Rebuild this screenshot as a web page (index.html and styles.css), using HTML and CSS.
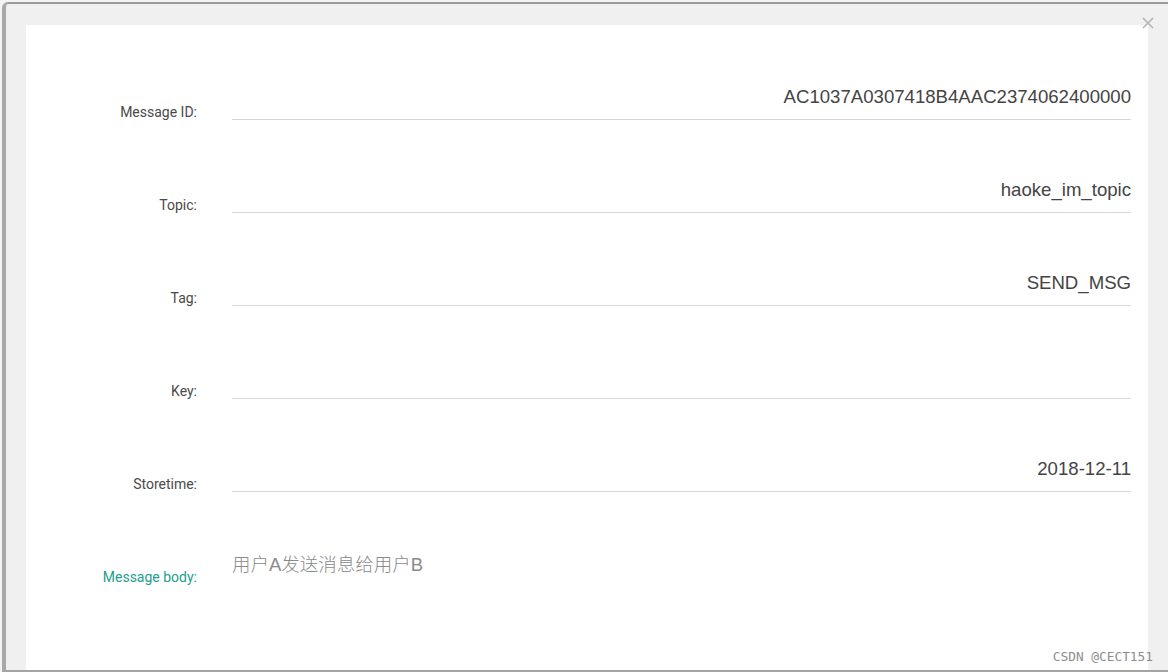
FILE: index.html
```html
<!DOCTYPE html>
<html lang="zh-CN">
<head>
<meta charset="utf-8">
<title>Message Detail</title>
<link rel="stylesheet" href="styles.css">
</head>
<body>
<div class="screen">
  <div class="frame">
    <button class="close" aria-label="close">
      <svg width="12" height="12" viewBox="0 0 12 12"><path d="M1 1L11 11M11 1L1 11" stroke="#b4b4b4" stroke-width="1.6" fill="none"/></svg>
    </button>
    <div class="modal">
      <div class="row">
        <div class="label">Message ID:</div>
        <div class="field"><span class="value">AC1037A0307418B4AAC2374062400000</span></div>
      </div>
      <div class="row">
        <div class="label">Topic:</div>
        <div class="field"><span class="value">haoke_im_topic</span></div>
      </div>
      <div class="row">
        <div class="label">Tag:</div>
        <div class="field"><span class="value">SEND_MSG</span></div>
      </div>
      <div class="row">
        <div class="label">Key:</div>
        <div class="field"><span class="value"></span></div>
      </div>
      <div class="row">
        <div class="label">Storetime:</div>
        <div class="field"><span class="value">2018-12-11</span></div>
      </div>
      <div class="row body-row">
        <div class="label active">Message body:</div>
        <div class="field plain"><span class="value body">用户A发送消息给用户B</span></div>
      </div>
    </div>
    <div class="watermark">CSDN @CECT151</div>
  </div>
</div>
</body>
</html>
```
FILE: styles.css
```css
html, body {
  margin: 0;
  padding: 0;
  background: #fafafa;
}
.screen {
  width: 1168px;
  height: 672px;
  box-sizing: border-box;
  padding: 2px 0 0 2px;
  background: #f4f4f4;
  overflow: hidden;
}
.frame {
  position: relative;
  height: 100%;
  box-sizing: border-box;
  background: #f0f0f0;
  border-top: 2px solid #9c9c9c;
  border-left: 4px solid #a8a8a8;
  border-bottom: 2px solid #a4a4a4;
  border-top-left-radius: 6px;
  padding: 21px 20px 0 20px;
  display: flex;
  flex-direction: column;
}
.close {
  position: absolute;
  top: 13px;
  right: 14px;
  width: 12px;
  height: 12px;
  padding: 0;
  border: 0;
  background: transparent;
  display: flex;
}
.modal {
  flex: 1;
  background: #ffffff;
  padding: 2px 17px 0 0;
}
.row {
  display: grid;
  grid-template-columns: 171px 1fr;
  column-gap: 35px;
  height: 93px;
}
.label {
  align-self: end;
  text-align: right;
  font-family: Roboto, "Liberation Sans", sans-serif;
  font-size: 14px;
  line-height: 16px;
  color: #4a4a4a;
  padding-bottom: 0;
}
.label.active {
  color: #22a08b;
}
.field {
  border-bottom: 1px solid #d6d6d6;
  display: flex;
  align-items: flex-end;
  justify-content: flex-end;
  padding-bottom: 11px;
}
.field.plain {
  border-bottom: 0;
  justify-content: flex-start;
  padding-bottom: 9px;
}
.value {
  font-family: "Liberation Sans", Arial, sans-serif;
  font-size: 18.6px;
  line-height: 22px;
  color: #444444;
  white-space: nowrap;
}
.value.body {
  font-family: "Liberation Sans", "Noto Sans CJK SC", sans-serif;
  font-size: 18.5px;
  color: #8a8a8a;
  font-weight: 300;
}
.watermark {
  position: absolute;
  right: 15px;
  bottom: 6px;
  font-family: "DejaVu Sans Mono", "Liberation Mono", monospace;
  font-size: 12.8px;
  line-height: 14px;
  color: #8e8e8e;
}
```
